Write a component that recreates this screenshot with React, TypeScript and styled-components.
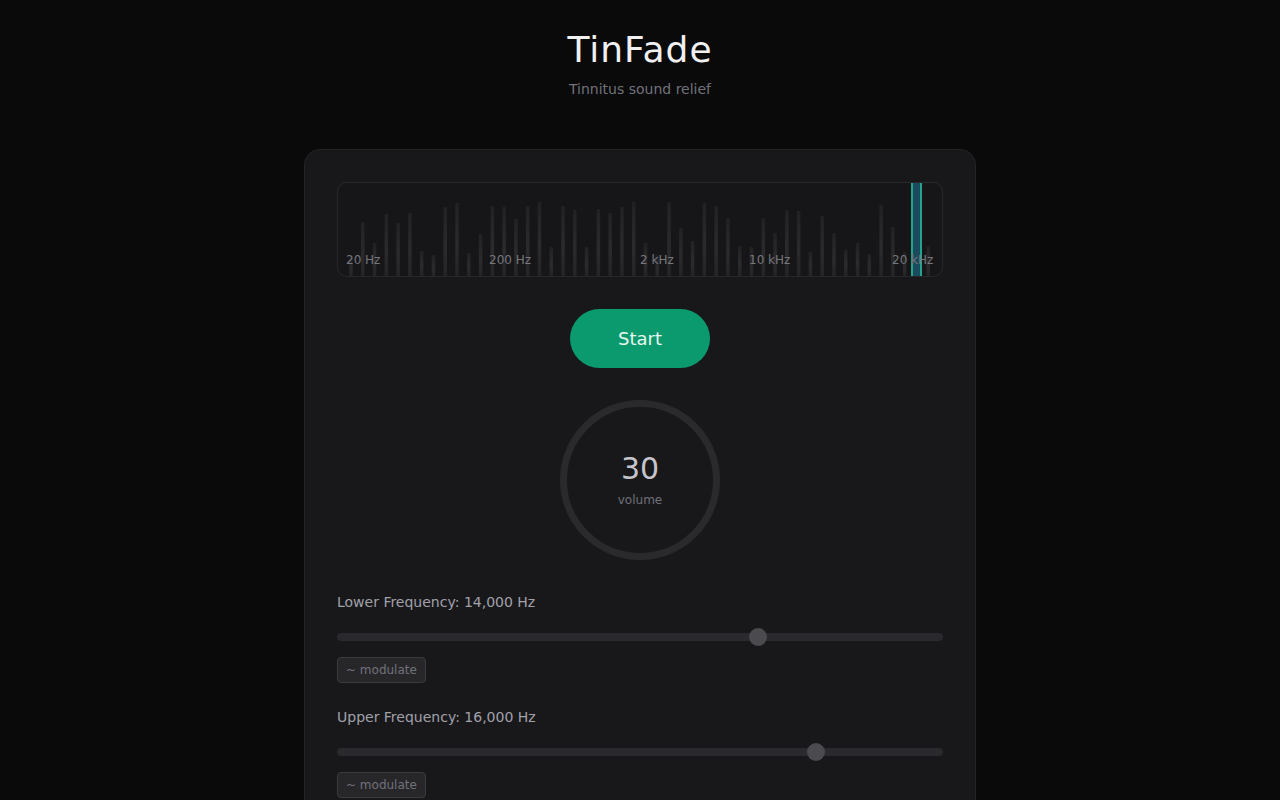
import styled, { createGlobalStyle } from "styled-components";

const GlobalStyle = createGlobalStyle`
  html, body {
    margin: 0;
    background: #0a0a0a;
    font-family: "DejaVu Sans", "Noto Sans", sans-serif;
    color: #e4e4e7;
  }
`;

const BAR_TOPS = [
  258, 222, 243, 214, 223, 213, 251, 255, 207, 203, 253, 234, 206, 207, 219,
  206, 202, 247, 206, 210, 247, 209, 213, 207, 202, 243, 255, 202, 228, 241,
  203, 206, 218, 246, 247, 218, 233, 210, 211, 252, 216, 233, 250, 243, 254,
  205, 227, 252, 230, 246
];

const SPECTRUM_W = 604;
const SPECTRUM_H = 93;
const SPECTRUM_BOTTOM = 276;

const LABELS = [
  { text: "20 Hz", left: 8 },
  { text: "200 Hz", left: 151 },
  { text: "2 kHz", left: 302 },
  { text: "10 kHz", left: 411 },
  { text: "20 kHz", left: 554 }
];

const Page = styled.main`
  display: flex;
  flex-direction: column;
  align-items: center;
  padding: 28px 16px 40px;
`;

const Header = styled.header`
  text-align: center;
  margin-bottom: 50px;
`;

const Title = styled.h1`
  margin: 0;
  font-size: 36px;
  line-height: 44px;
  font-weight: 400;
  letter-spacing: 1px;
  color: #f0f0f2;
`;

const Subtitle = styled.p`
  margin: 7px 0 0;
  font-size: 14px;
  line-height: 20px;
  color: #71717a;
`;

const Card = styled.section`
  width: 672px;
  box-sizing: border-box;
  padding: 32px;
  background: #18181b;
  border: 1px solid #242427;
  border-radius: 16px;
  display: flex;
  flex-direction: column;
  gap: 32px;
`;

const Spectrum = styled.div`
  position: relative;
  height: ${SPECTRUM_H}px;
  border: 1px solid #28282c;
  border-radius: 10px;
  background: #161618;
  overflow: hidden;
`;

const BarSvg = styled.svg`
  display: block;
`;

const FreqLabel = styled.span<{ $left: number }>`
  position: absolute;
  left: ${({ $left }) => $left}px;
  bottom: 9px;
  font-size: 12px;
  line-height: 14px;
  color: #77777e;
  white-space: nowrap;
`;

const Marker = styled.div`
  position: absolute;
  top: 0;
  bottom: 0;
  left: 573px;
  width: 11px;
  box-sizing: border-box;
  border-left: 2px solid #26a38b;
  border-right: 2px solid #26a38b;
  background: #1b4b5e;
`;

const StartButton = styled.button`
  align-self: center;
  padding: 18px 48px;
  font-family: inherit;
  font-size: 18px;
  line-height: 23px;
  color: #e6f7f0;
  background: #0b9a6d;
  border: none;
  border-radius: 999px;
  cursor: pointer;
`;

const Dial = styled.div`
  align-self: center;
  position: relative;
  width: 160px;
  height: 160px;
  display: flex;
  flex-direction: column;
  align-items: center;
  justify-content: center;
`;

const DialRing = styled.svg`
  position: absolute;
  inset: 0;
`;

const DialValue = styled.div`
  position: relative;
  font-size: 30px;
  line-height: 34px;
  color: #c4c4ca;
`;

const DialCaption = styled.div`
  position: relative;
  margin-top: 6px;
  font-size: 12px;
  line-height: 16px;
  color: #71717a;
`;

const Controls = styled.div`
  display: flex;
  flex-direction: column;
  gap: 24px;
`;

const Control = styled.div`
  display: flex;
  flex-direction: column;
  align-items: flex-start;
`;

const ControlLabel = styled.label`
  font-size: 14px;
  line-height: 20px;
  color: #a1a1aa;
`;

const Slider = styled.div`
  position: relative;
  align-self: stretch;
  height: 18px;
  margin: 16px 0 11px;
  display: flex;
  align-items: center;
`;

const Track = styled.div`
  flex: 1;
  height: 8px;
  border-radius: 999px;
  background: #2a2a2e;
`;

const Thumb = styled.div`
  position: absolute;
  top: 0;
  width: 18px;
  height: 18px;
  border-radius: 50%;
  background: #4a4a4f;
`;

const ModulateButton = styled.button`
  padding: 5px 8px;
  font-family: inherit;
  font-size: 12px;
  line-height: 14px;
  color: #71717a;
  background: #27272a;
  border: 1px solid #3a3a40;
  border-radius: 4px;
  cursor: pointer;
`;

const MAX_HZ = 20000;

const FrequencyControl = ({ label, value }: { label: string; value: number }) => {
  const ratio = value / MAX_HZ;
  return (
    <Control>
      <ControlLabel>
        {label}: {value.toLocaleString("en-US")} Hz
      </ControlLabel>
      <Slider>
        <Track />
        <Thumb style={{ left: `calc(${ratio} * (100% - 18px))` }} />
      </Slider>
      <ModulateButton>~ modulate</ModulateButton>
    </Control>
  );
};

export default function App() {
  const step = 11.78;
  return (
    <>
      <GlobalStyle />
      <Page>
        <Header>
          <Title>TinFade</Title>
          <Subtitle>Tinnitus sound relief</Subtitle>
        </Header>
        <Card>
          <Spectrum>
            <BarSvg width={SPECTRUM_W} height={SPECTRUM_H}>
              <defs>
                <linearGradient id="bar" x1="0" y1="0" x2="0" y2="1">
                  <stop offset="0" stopColor="#ffffff" stopOpacity="0.05" />
                  <stop offset="0.6" stopColor="#ffffff" stopOpacity="0.09" />
                  <stop offset="1" stopColor="#ffffff" stopOpacity="0.06" />
                </linearGradient>
              </defs>
              {BAR_TOPS.map((top, i) => {
                const h = SPECTRUM_BOTTOM - top;
                return (
                  <rect
                    key={i}
                    x={13 + i * step - 1.75}
                    y={SPECTRUM_H - h}
                    width={3.5}
                    height={h}
                    rx={1}
                    fill="url(#bar)"
                  />
                );
              })}
            </BarSvg>
            <Marker />
            {LABELS.map((l) => (
              <FreqLabel key={l.text} $left={l.left}>
                {l.text}
              </FreqLabel>
            ))}
          </Spectrum>

          <StartButton>Start</StartButton>

          <Dial>
            <DialRing width="160" height="160" viewBox="0 0 160 160">
              <circle cx="80" cy="80" r="76.5" fill="none" stroke="#2a2a2d" strokeWidth="7" />
            </DialRing>
            <DialValue>30</DialValue>
            <DialCaption>volume</DialCaption>
          </Dial>

          <Controls>
            <FrequencyControl label="Lower Frequency" value={14000} />
            <FrequencyControl label="Upper Frequency" value={16000} />
          </Controls>
        </Card>
      </Page>
    </>
  );
}
